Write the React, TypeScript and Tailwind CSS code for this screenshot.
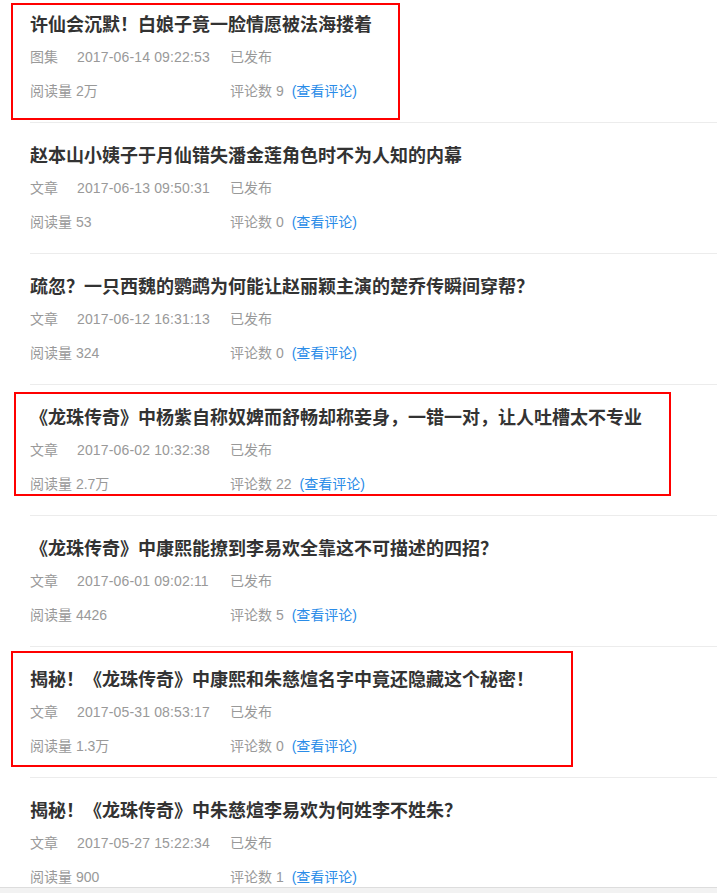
type Post = {
  title: string;
  kind: string;
  time: string;
  reads: string;
  comments: number;
  mark?: string;
};

const posts: Post[] = [
  {
    title: "许仙会沉默！白娘子竟一脸情愿被法海搂着",
    kind: "图集",
    time: "2017-06-14 09:22:53",
    reads: "2万",
    comments: 9,
    mark: "top-[3px] -left-[19px] w-[389px] h-[117px]",
  },
  {
    title: "赵本山小姨子于月仙错失潘金莲角色时不为人知的内幕",
    kind: "文章",
    time: "2017-06-13 09:50:31",
    reads: "53",
    comments: 0,
  },
  {
    title: "疏忽？一只西魏的鹦鹉为何能让赵丽颖主演的楚乔传瞬间穿帮？",
    kind: "文章",
    time: "2017-06-12 16:31:13",
    reads: "324",
    comments: 0,
  },
  {
    title: "《龙珠传奇》中杨紫自称奴婢而舒畅却称妾身，一错一对，让人吐槽太不专业",
    kind: "文章",
    time: "2017-06-02 10:32:38",
    reads: "2.7万",
    comments: 22,
    mark: "top-[7px] -left-[16px] w-[657px] h-[104px]",
  },
  {
    title: "《龙珠传奇》中康熙能撩到李易欢全靠这不可描述的四招？",
    kind: "文章",
    time: "2017-06-01 09:02:11",
    reads: "4426",
    comments: 5,
  },
  {
    title: "揭秘！《龙珠传奇》中康熙和朱慈煊名字中竟还隐藏这个秘密！",
    kind: "文章",
    time: "2017-05-31 08:53:17",
    reads: "1.3万",
    comments: 0,
    mark: "top-[4px] -left-[19px] w-[562px] h-[116px]",
  },
  {
    title: "揭秘！《龙珠传奇》中朱慈煊李易欢为何姓李不姓朱？",
    kind: "文章",
    time: "2017-05-27 15:22:34",
    reads: "900",
    comments: 1,
  },
];

function PostRow({ post, first }: { post: Post; first: boolean }) {
  return (
    <li
      className={`relative border-b border-[#ececec] pb-[21px] ${
        first ? "pt-[13px]" : "pt-[21px]"
      }`}
    >
      {/* annotation box */}
      {post.mark && (
        <div className={`absolute border-2 border-[#ff0000] pointer-events-none ${post.mark}`} />
      )}

      <h3 className="text-[18px] leading-[24px] font-bold text-[#333] whitespace-nowrap">
        {post.title}
      </h3>

      <div className="mt-[10px] flex text-[14px] leading-[20px] text-[#999]">
        <div className="w-[200px] flex">
          <span className="w-[47px]">{post.kind}</span>
          <span className="tracking-[0.15px]">{post.time}</span>
        </div>
        <span>已发布</span>
      </div>

      <div className="mt-[14px] flex text-[14px] leading-[20px] text-[#999]">
        <div className="w-[200px]">阅读量 {post.reads}</div>
        <div>
          评论数 {post.comments}
          <a className="ml-[8px] text-[#2a8ce8] cursor-pointer">(查看评论)</a>
        </div>
      </div>
    </li>
  );
}

export default function App() {
  return (
    <div
      className="h-[893px] w-full flex flex-col overflow-hidden bg-white"
      style={{ fontFamily: '"Liberation Sans", "Noto Sans CJK SC", sans-serif' }}
    >
      <ul className="flex-1 min-h-0 overflow-hidden pl-[30px]">
        {posts.map((p, i) => (
          <PostRow key={p.time} post={p} first={i === 0} />
        ))}
      </ul>

      {/* scrollbar strip */}
      <div className="h-[6px] shrink-0 border-t border-[#dddddd] bg-[#f2f2f2]" />
    </div>
  );
}
